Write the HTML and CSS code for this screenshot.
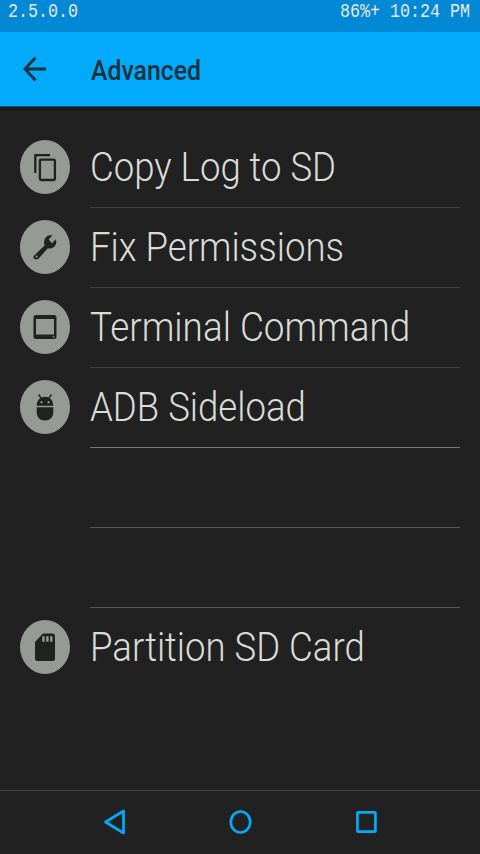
FILE: index.html
```html
<!DOCTYPE html>
<html lang="en">
<head>
<meta charset="utf-8">
<title>Advanced</title>
<link rel="stylesheet" href="styles.css">
</head>
<body>
<div class="screen">
  <div class="status"><span class="status-text">2.5.0.0</span><span class="status-text right">86%+ 10:24 PM</span></div>
  <header class="bar">
    <svg class="back" viewBox="0 0 24 24" width="24" height="26" preserveAspectRatio="none"><path d="M23 12H2.500M12.500 1.500L2 12l10.500 10.500" fill="none" stroke="#16323c" stroke-width="2.700"/></svg>
    <h1 class="title">Advanced</h1>
  </header>
  <main class="list">
    <div class="row">
      <span class="disc"><svg viewBox="0 0 50 54" width="50" height="54"><path d="M15.300 33V15.200H30" fill="none" stroke="#20221f" stroke-width="2.300" stroke-linejoin="round"/><rect x="19.900" y="19.600" width="15" height="20.400" rx="1.200" fill="none" stroke="#20221f" stroke-width="2.300"/></svg></span>
      <div class="cell"><span class="label">Copy Log to SD</span></div>
    </div>
    <div class="row">
      <span class="disc"><svg viewBox="0 0 50 54" width="50" height="54"><path d="M14.200 35.500L24.600 25.500C23.400 22 24.300 18.300 26.700 16.400C28.400 15 30.500 14.900 32.300 15.600L28.600 19.600L32 23.300L35.900 19.300C36.800 22 36.100 25 34.200 26.800C32.400 28.500 30 28.900 27.800 28.300L18.700 38.400C15.900 40.900 11.600 38.300 14.200 35.500Z" fill="#20221f"/><circle cx="16.600" cy="36.600" r="1.100" fill="#969a95"/></svg></span>
      <div class="cell"><span class="label">Fix Permissions</span></div>
    </div>
    <div class="row">
      <span class="disc"><svg viewBox="0 0 50 54" width="50" height="54"><path fill="#20221f" fill-rule="evenodd" d="M16 15H34Q36.500 15 36.500 17.500V36.500Q36.500 39 34 39H16Q13.500 39 13.500 36.500V17.500Q13.500 15 16 15ZM16 19V34.500H34V19Z"/><path d="M32 36.400h3l-1.500 1.600z" fill="#969a95"/></svg></span>
      <div class="cell"><span class="label wide">Terminal Command</span></div>
    </div>
    <div class="row bright">
      <span class="disc"><svg viewBox="0 0 50 54" width="50" height="54"><path d="M16.700 25.700C16.700 20.500 20 16.700 25 16.700S33.300 20.500 33.300 25.700ZM16.700 27.200H33.300V32C33.300 37 30 40.500 25 40.500S16.700 37 16.700 32Z" fill="#20221f"/><path d="M18.500 14.500L21 18M31.500 14.500L29 18" stroke="#20221f" stroke-width="1.400"/><circle cx="21.500" cy="22.300" r="1" fill="#b4b8b3"/><circle cx="28.500" cy="22.300" r="1" fill="#b4b8b3"/></svg></span>
      <div class="cell"><span class="label">ADB Sideload</span></div>
    </div>
    <div class="row mid"><span class="gap"></span><div class="cell"></div></div>
    <div class="row mid"><span class="gap"></span><div class="cell"></div></div>
    <div class="row last">
      <span class="disc"><svg viewBox="0 0 50 54" width="50" height="54"><path d="M23 13.500H32.500Q35 13.500 35 16V38.500Q35 41 32.500 41H17.500Q15 41 15 38.500V22Z" fill="#20221f"/><path d="M23.500 16.300v5.400M27.400 16.300v5.400M31.300 16.300v5.400" stroke="#969a95" stroke-width="2.400"/></svg></span>
      <div class="cell"><span class="label">Partition SD Card</span></div>
    </div>
  </main>
  <nav class="nav">
    <svg viewBox="0 0 26 30" width="26" height="30"><path d="M4.500 15L22.500 4V26Z"/></svg>
    <svg viewBox="0 0 26 30" width="26" height="30"><ellipse cx="13.500" cy="15" rx="9.700" ry="10.500"/></svg>
    <svg viewBox="0 0 26 30" width="26" height="30"><rect x="4.400" y="5.400" width="18" height="19.200" rx=".5"/></svg>
  </nav>
</div>
</body>
</html>
```

FILE: styles.css
```css
* { box-sizing: border-box; }
body { margin: 0; background: #212121; }
.screen {
  width: 480px;
  height: 854px;
  display: flex;
  flex-direction: column;
  overflow: hidden;
  font-family: Roboto, sans-serif;
  background: #212121;
}
.status {
  height: 32px;
  padding: 2px 10px 0 8px;
  display: flex;
  justify-content: space-between;
  background: #0288d4;
}
.status-text {
  height: 20px;
  font: 16.66px/20px "Liberation Mono", monospace;
  color: #e8e8e8;
  white-space: pre;
  transform: scaleY(1.17);
}
.bar {
  height: 75px;
  padding-left: 23px;
  display: flex;
  align-items: center;
  background: #03a9fa;
  border-bottom: 1px solid #075779;
}
.title {
  margin: 4px 0 0 44px;
  font-size: 27px;
  line-height: 32px;
  font-weight: 500;
  color: #16323c;
  transform: scaleX(.92);
  transform-origin: left;
}
.list {
  flex: 1;
  padding: 17px 20px 0;
  border-top: 4px solid #1b1c1a;
}
.row { display: flex; height: 80px; }
.disc, .gap { width: 50px; height: 54px; margin-top: 12px; flex: none; }
.disc { border-radius: 50%; background: #969a95; }
.disc svg { display: block; }
.cell {
  flex: 1;
  margin-left: 20px;
  border-bottom: 1px solid #424242;
}
.bright .cell { border-color: #777; }
.mid .cell { border-color: #5a5a5a; }
.last .cell { border: 0; }
.label {
  display: inline-block;
  font-size: 40px;
  line-height: 48px;
  font-weight: 300;
  color: #d9dcd8;
  white-space: nowrap;
  margin-top: 16px;
  transform: scaleX(.914);
  transform-origin: left;
}
.wide { transform: scaleX(.921); }
.nav {
  height: 64px;
  padding: 0 101px 2px;
  display: flex;
  justify-content: space-between;
  align-items: center;
  border-top: 1px solid #424242;
}
.nav svg { fill: none; stroke: #03a9fa; stroke-width: 2.7; stroke-linejoin: round; }
```
